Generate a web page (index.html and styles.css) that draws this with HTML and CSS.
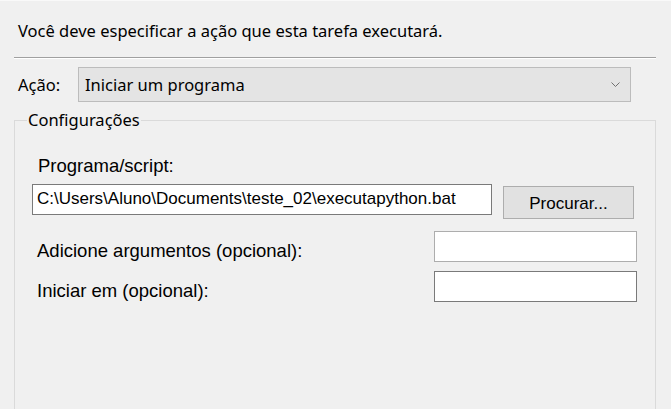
FILE: index.html
```html
<!DOCTYPE html>
<html lang="pt">
<head>
<meta charset="utf-8">
<title>Ação</title>
<link rel="stylesheet" href="styles.css">
</head>
<body>
<div class="page">
  <div class="header">Você deve especificar a ação que esta tarefa executará.</div>
  <div class="separator"></div>
  <div class="action-row">
    <span class="action-label">Ação:</span>
    <div class="combo">
      <span class="combo-text">Iniciar um programa</span>
      <svg class="chevron" width="9" height="5" viewBox="0 0 9 5"><polyline points="0.5,0.5 4.5,4.5 8.5,0.5" fill="none" stroke="#707070" stroke-width="1"/></svg>
    </div>
  </div>
  <fieldset class="group">
    <legend class="group-title">Configurações</legend>
    <div class="field-label">Programa/script:</div>
    <div class="row row-program">
      <div class="input input-program">C:\Users\Aluno\Documents\teste_02\executapython.bat</div>
      <div class="button">Procurar...</div>
    </div>
    <div class="row row-args">
      <div class="row-label">Adicione argumentos (opcional):</div>
      <div class="input input-small input-light"></div>
    </div>
    <div class="row row-start">
      <div class="row-label">Iniciar em (opcional):</div>
      <div class="input input-small"></div>
    </div>
  </fieldset>
</div>
</body>
</html>
```

FILE: styles.css
```css
html, body {
  margin: 0;
  padding: 0;
  background: #f0f0f0;
  overflow: hidden;
}

.page {
  width: 671px;
  height: 409px;
  border-top: 1px solid #f9f9f9;
  box-sizing: border-box;
  font-family: "Noto Sans", "DejaVu Sans", sans-serif;
  color: #000;
}

.header {
  font-size: 16.5px;
  line-height: 20px;
  padding: 20px 0 0 18px;
  height: 36px;
}

.separator {
  margin-left: 14px;
  width: 642px;
  height: 1px;
  background: #a0a0a0;
  border-bottom: 1px solid #ffffff;
}

.action-row {
  display: flex;
  align-items: center;
  margin-top: 8px;
}

.action-label {
  font-size: 16.5px;
  line-height: 20px;
  width: 78px;
  padding-left: 18px;
  box-sizing: border-box;
}

.combo {
  display: flex;
  align-items: center;
  justify-content: space-between;
  width: 553px;
  height: 35px;
  box-sizing: border-box;
  background: #e4e4e4;
  border: 1px solid #bcbcbc;
  padding: 0 10px 0 6px;
}

.combo-text {
  font-size: 16.5px;
  line-height: 20px;
}

.chevron {
  display: block;
}

.group {
  margin: 7px 0 0 14px;
  width: 642px;
  height: 320px;
  box-sizing: border-box;
  border: 1px solid #dadada;
  border-bottom: none;
  padding: 0 0 0 17px;
  min-width: 0;
}

.group-title {
  font-size: 16.5px;
  line-height: 22px;
  padding: 0 1px;
  margin-left: -5px;
}

.field-label,
.row-label,
.input,
.button {
  font-family: "Liberation Sans", Arial, sans-serif;
  line-height: 20px;
}

.field-label,
.row-label {
  font-size: 18.5px;
}

.input,
.button {
  font-size: 17px;
}

.field-label {
  margin-top: 25px;
  padding-left: 6px;
}

.row {
  display: flex;
  align-items: flex-start;
  justify-content: space-between;
  width: 605px;
}

.row-program {
  margin-top: 8px;
}

.row-args {
  margin-top: 12px;
}

.row-start {
  margin-top: 9px;
}

.row-label {
  margin-top: 10px;
  padding-left: 5px;
}

.input {
  height: 31px;
  box-sizing: border-box;
  background: #ffffff;
  border: 1px solid #7a7a7a;
  padding: 4px 4px 0;
  white-space: nowrap;
  overflow: hidden;
}

.input-program {
  width: 460px;
}

.input-small {
  width: 203px;
}

.input-light {
  border-color: #adadad;
}

.button {
  margin-top: 2px;
  margin-right: 3px;
  width: 131px;
  height: 33px;
  box-sizing: border-box;
  background: #e1e1e1;
  border: 1px solid #adadad;
  display: flex;
  align-items: center;
  justify-content: center;
  padding-top: 3px;
}
```
